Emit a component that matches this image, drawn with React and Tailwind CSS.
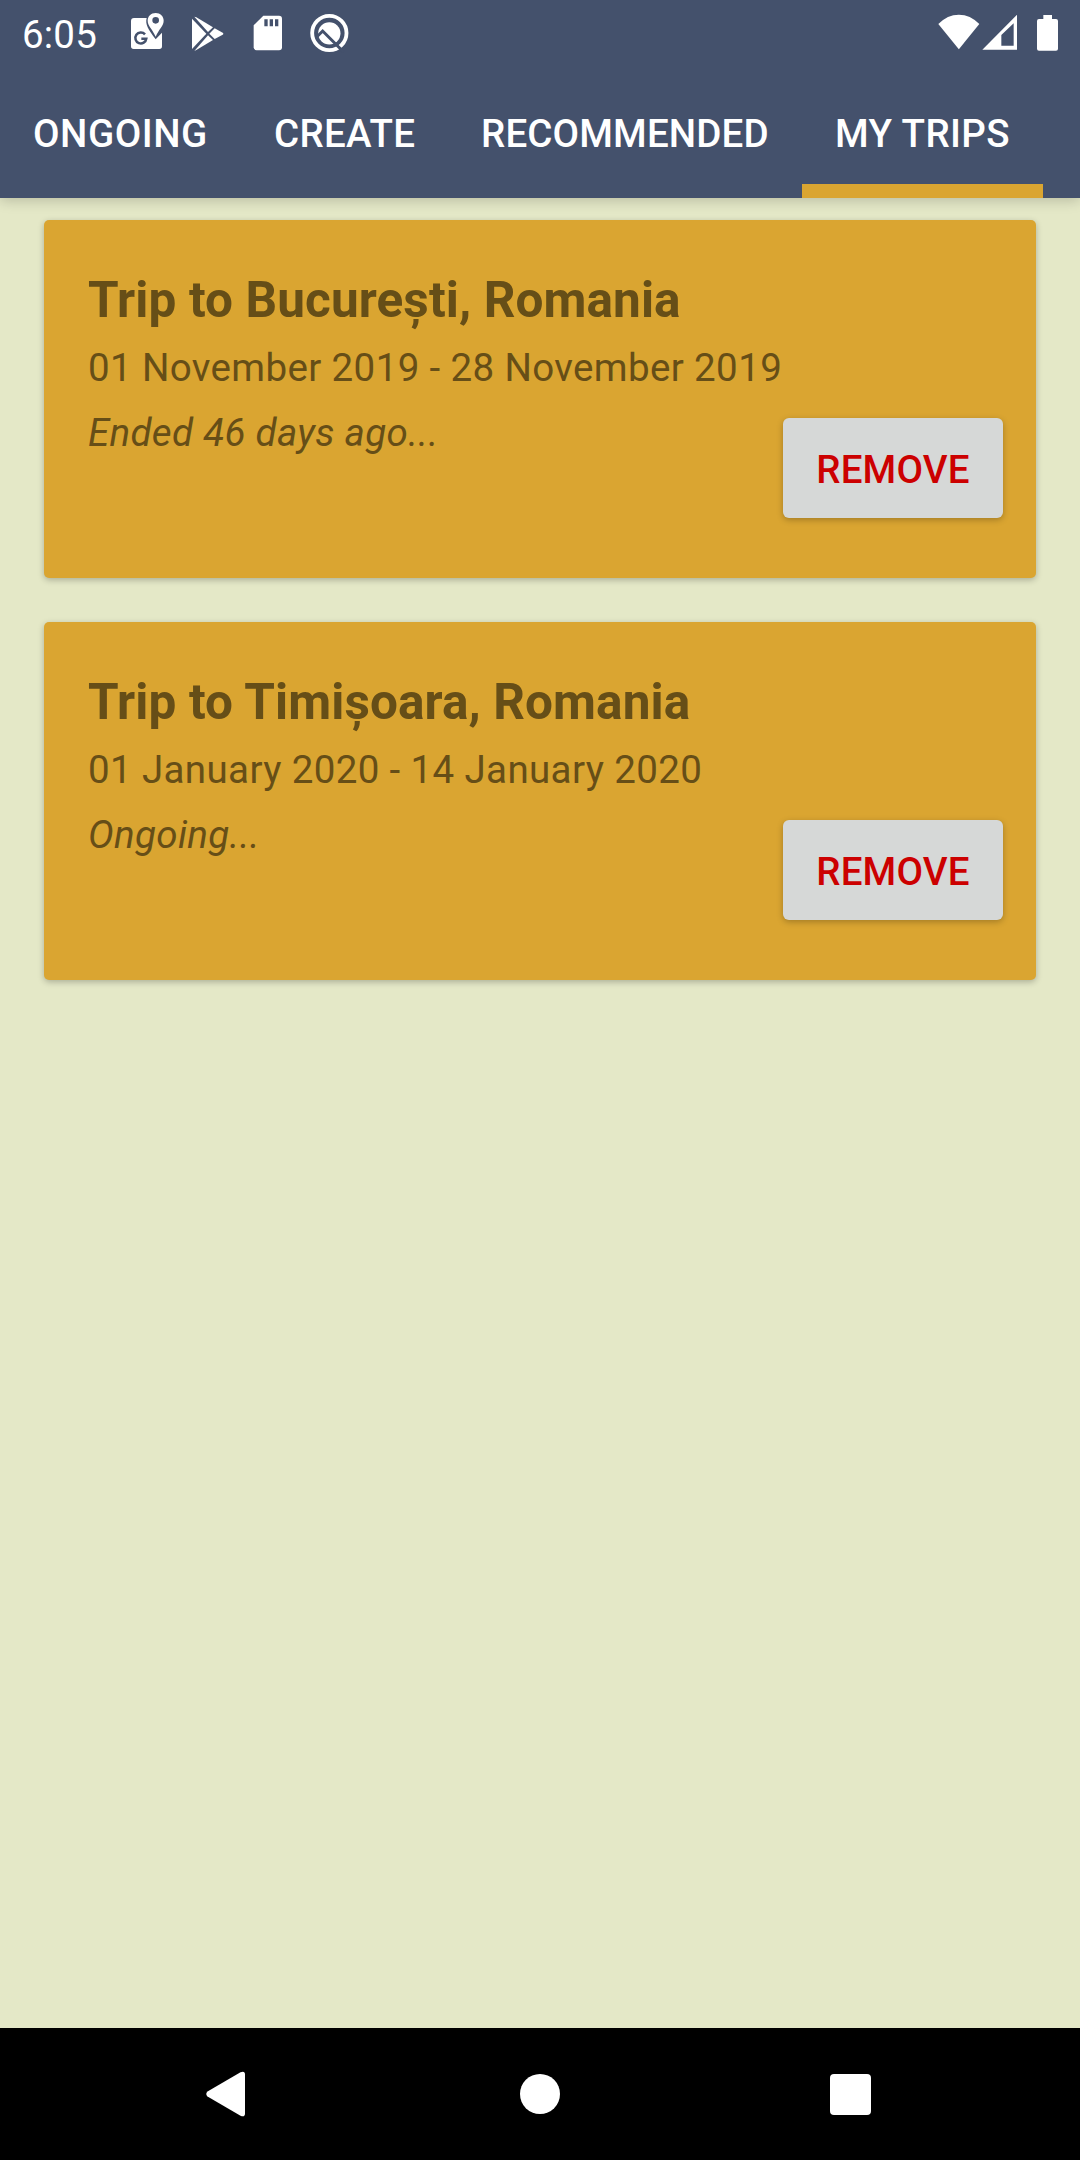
const tabs = [
  { label: "ONGOING", size: "w-[241px] tracking-[0.55px]" },
  { label: "CREATE", size: "w-[207px] tracking-[0.3px]" },
  { label: "RECOMMENDED", size: "w-[354px] tracking-[0.15px]" },
  { label: "MY TRIPS", size: "w-[241px] tracking-[0.4px]", active: true },
];

const trips = [
  {
    title: "Trip to București, Romania",
    dates: "01 November 2019 - 28 November 2019",
    status: "Ended 46 days ago...",
  },
  {
    title: "Trip to Timișoara, Romania",
    dates: "01 January 2020 - 14 January 2020",
    status: "Ongoing...",
  },
];

function MapsIcon() {
  return (
    <svg className="h-[38px] w-[34px]" viewBox="390 36 102 114" fill="none">
      <path
        fill="#fff"
        d="M402 54H440C435 72 444 88 467 118L486 98V139Q486 147 478 147H401Q393 147 393 139V63Q393 54 402 54Z"
      />
      <path
        fill="#fff"
        fillRule="evenodd"
        d="M467 39C453 39 443 49 443 62C443 78 458 88 467 110C476 88 491 78 491 62C491 49 481 39 467 39ZM467 51A10 10 0 1 1 467 71A10 10 0 1 1 467 51Z"
      />
      <path stroke="#44516c" strokeWidth="7.500" d="M435 103A16.500 16.500 0 1 0 439 116H424" />
    </svg>
  );
}

function PlayIcon() {
  return (
    <svg className="h-[36px] w-[33px]" viewBox="574 47 99 108" fill="#fff">
      <path d="M577 55L620 100L577 146Z" />
      <path d="M584 49L590 51L640 81L625 95Z" />
      <path d="M584 152L590 149L640 119L625 105Z" />
      <path d="M645 84L669 97Q673 100 669 103L645 116L629 100Z" />
    </svg>
  );
}

function SdCardIcon() {
  return (
    <svg className="h-[36px] w-[30px]" viewBox="760 46 90 108">
      <path
        fill="#fff"
        d="M791 48H838Q847 48 847 57V143Q847 152 838 152H771Q762 152 762 143V77Z"
      />
      <path fill="#44516c" d="M794 59H804V80H794ZM810 59H820V80H810ZM826 59H836V80H826Z" />
    </svg>
  );
}

function BetaIcon() {
  return (
    <svg className="h-[40px] w-[40px]" viewBox="927 39 120 120" fill="none">
      <circle cx="988" cy="99" r="51.500" stroke="#fff" strokeWidth="11.500" />
      <circle cx="988" cy="100" r="33.500" fill="#fff" />
      <path stroke="#44516c" strokeWidth="9" d="M950 111L968 93L1031 156" />
    </svg>
  );
}

function WifiIcon() {
  return (
    <svg className="h-[36px] w-[42px]" viewBox="113 43 126 108" fill="#fff">
      <path d="M114 73Q141 45 175.500 45Q210 45 237 73L175.500 149Z" />
    </svg>
  );
}

function SignalIcon() {
  return (
    <svg className="h-[36px] w-[36px]" viewBox="246 43 108 108" fill="#fff">
      <path fillRule="evenodd" d="M247 150L351 45V150ZM304 106V138H341V71Z" />
    </svg>
  );
}

function BatteryIcon() {
  return (
    <svg className="h-[36px] w-[22px]" viewBox="411 45 66 108" fill="#fff">
      <path d="M430 45H456V57H468Q474 57 474 63V146Q474 152 468 152H417Q411 152 411 146V63Q411 57 417 57H430Z" />
    </svg>
  );
}

function StatusBar() {
  return (
    <div className="flex h-[66px] items-start justify-between text-white">
      <div className="flex pl-[22px]">
        <span className="mt-[12px] w-[108px] text-[38.5px] leading-[45px] tracking-[0.2px]">6:05</span>
        <div className="mt-[12px] w-[61px]"><MapsIcon /></div>
        <div className="mt-[16px] w-[62px]"><PlayIcon /></div>
        <div className="mt-[15px] w-[56px]"><SdCardIcon /></div>
        <div className="mt-[13px]"><BetaIcon /></div>
      </div>
      <div className="flex pr-[21px] pt-[14px]">
        <div className="w-[44px]"><WifiIcon /></div>
        <div className="w-[55px]"><SignalIcon /></div>
        <div className="pt-px"><BatteryIcon /></div>
      </div>
    </div>
  );
}

function Tab({ label, size, active }) {
  return (
    <button className={`flex h-[132px] flex-none flex-col justify-between text-left font-medium ${size}`}>
      <span className="pt-[45px] pl-[33px] text-[38.5px] leading-[45px] whitespace-nowrap text-white">
        {label}
      </span>
      {active && <span className="h-[14px] w-full bg-[#daa531]" />}
    </button>
  );
}

function TripCard({ trip }) {
  return (
    <article className="flex h-[358px] justify-between rounded-[5px] bg-[#daa531] pt-[51px] pr-[33px] pl-[44px] text-[#664e17] shadow-[0_2px_6px_rgba(0,0,0,0.25)]">
      <div className="w-0 whitespace-nowrap">
        <h2 className="text-[49.5px] leading-[58px] font-bold tracking-[0.1px]">{trip.title}</h2>
        <p className="mt-[16px] text-[38.5px] leading-[45px] tracking-[0.37px]">{trip.dates}</p>
        <p className="mt-[20px] text-[38.5px] leading-[45px] tracking-[0.32px] italic">{trip.status}</p>
      </div>
      <button className="mt-[147px] h-[100px] w-[220px] rounded-[6px] bg-[#d6d8d7] pt-[4px] text-[38.5px] font-medium tracking-[0.2px] text-[#cc0000] shadow-[0_2px_6px_rgba(0,0,0,0.25)]">
        REMOVE
      </button>
    </article>
  );
}

function NavigationBar() {
  return (
    <nav className="flex h-[132px] items-center bg-black pl-[206px]">
      <svg className="h-[46px] w-[40px]" viewBox="0 0 40 46" fill="#fff">
        <path d="M1.500 20.500L34.500 1.200Q39 -0.500 39 3.500V42.500Q39 46.500 34.500 44.800L1.500 25.500Q-1 23 1.500 20.500Z" />
      </svg>
      <div className="ml-[274px] h-[40px] w-[40px] rounded-full bg-white" />
      <div className="ml-[270px] h-[41px] w-[41px] rounded-[4px] bg-white" />
    </nav>
  );
}

export default function App() {
  return (
    <div className="flex h-[2160px] w-[1080px] flex-col overflow-hidden bg-[#e4e8c7] font-[Roboto,sans-serif]">
      <header className="h-[198px] flex-none bg-[#44516c] shadow-[0_3px_12px_rgba(0,0,0,0.18)]">
        <StatusBar />
        <div className="flex">
          {tabs.map((tab) => (
            <Tab key={tab.label} {...tab} />
          ))}
        </div>
      </header>
      <main className="flex flex-1 flex-col gap-[44px] px-[44px] pt-[22px]">
        {trips.map((trip) => (
          <TripCard key={trip.title} trip={trip} />
        ))}
      </main>
      <NavigationBar />
    </div>
  );
}
